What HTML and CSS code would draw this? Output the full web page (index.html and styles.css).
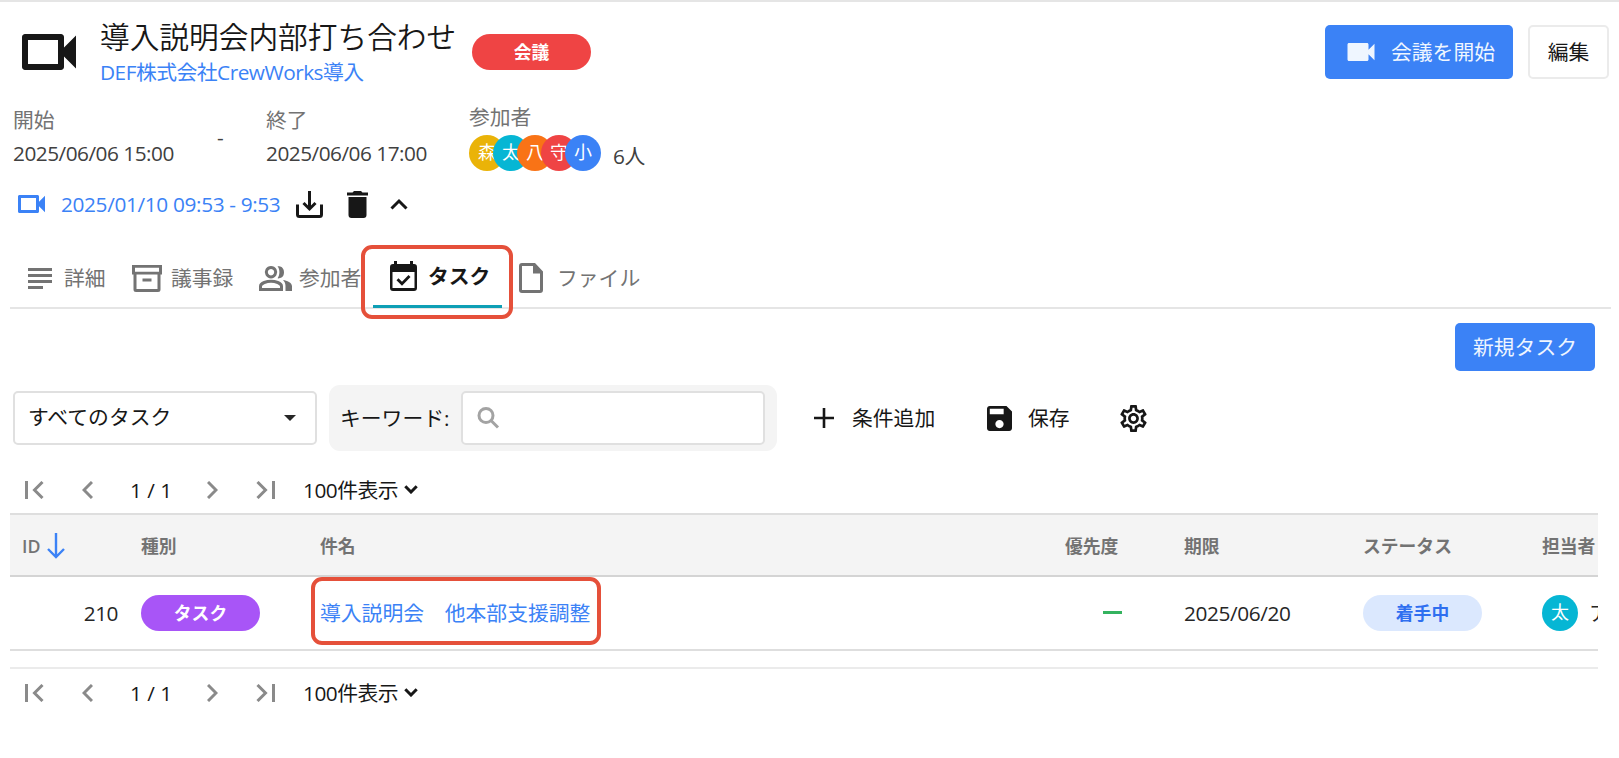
FILE: index.html
```html
<!DOCTYPE html>
<html lang="ja">
<head>
    <meta charset="UTF-8">
    <meta name="viewport" content="width=device-width, initial-scale=1.0">
    <title>導入説明会内部打ち合わせ</title>
    <link rel="stylesheet" href="styles.css">
</head>
<body>

    <header class="header">
        <svg class="header-icon" viewBox="0 0 24 24"><path d="M15 8v8H5V8h10m1-2H4c-.55 0-1 .45-1 1v10c0 .55.45 1 1 1h12c.55 0 1-.45 1-1v-3.5l4 4v-11l-4 4V7c0-.55-.45-1-1-1z"/></svg>
        <div class="header-text">
            <h1>導入説明会内部打ち合わせ</h1>
            <a class="project-link" href="#">DEF株式会社CrewWorks導入</a>
        </div>
        <span class="badge badge-meeting">会議</span>
        <div class="header-buttons">
            <button class="button button-start">
                <svg viewBox="0 0 24 24"><path d="M17 10.5V7c0-.55-.45-1-1-1H4c-.55 0-1 .45-1 1v10c0 .55.45 1 1 1h12c.55 0 1-.45 1-1v-3.5l4 4v-11l-4 4z"/></svg>
                会議を開始
            </button>
            <button class="button button-edit">編集</button>
        </div>
    </header>

    <section class="meta">
        <div class="meta-start">
            <div class="meta-label">開始</div>
            <div class="meta-date">2025/06/06 15:00</div>
        </div>
        <div class="meta-dash">-</div>
        <div class="meta-end">
            <div class="meta-label">終了</div>
            <div class="meta-date">2025/06/06 17:00</div>
        </div>
        <div class="meta-members">
            <div class="meta-label">参加者</div>
            <div class="members">
                <span class="avatar yellow">森</span>
                <span class="avatar cyan">太</span>
                <span class="avatar orange">八</span>
                <span class="avatar red">守</span>
                <span class="avatar blue">小</span>
                <span class="members-count">6人</span>
            </div>
        </div>
    </section>

    <section class="recording">
        <svg class="rec-video" viewBox="0 0 24 24"><path d="M15 8v8H5V8h10m1-2H4c-.55 0-1 .45-1 1v10c0 .55.45 1 1 1h12c.55 0 1-.45 1-1v-3.5l4 4v-11l-4 4V7c0-.55-.45-1-1-1z"/></svg>
        <a class="rec-link" href="#">2025/01/10 09:53 - 9:53</a>
        <svg class="rec-download" viewBox="0 0 27 27"><path d="M1.500 13.500v10q0 2 2 2h20q2 0 2-2v-10M13.500 0v18M7.500 12l6 6 6-6"/></svg>
        <svg class="rec-delete" viewBox="0 0 21 27"><path d="M1.500 6h18v18q0 3-3 3h-12q-3 0-3-3zM0 1.500h5.500L7 0h7l1.500 1.500H21v3H0z"/></svg>
        <svg class="rec-toggle" viewBox="0 0 18 12"><path d="M1.500 10.500L9 3l7.500 7.500"/></svg>
    </section>

    <nav class="tabs">
        <a class="tab tab-detail" href="#">
            <svg viewBox="0 0 24 21"><path d="M0 0h24v3H0zM0 6h24v3H0zM0 12h24v3H0zM0 18h15v3H0z"/></svg>
            詳細
        </a>
        <a class="tab tab-minutes" href="#">
            <svg viewBox="0 0 30 27"><path d="M0 0h30v9.500h-1.500v15q0 2.500-2.500 2.500H4q-2.500 0-2.500-2.500v-15H0zM3 2.800v4h24v-4zM4.500 9.500V24h21V9.500zM10.500 13.500h9v3h-9z" fill-rule="evenodd"/></svg>
            議事録
        </a>
        <a class="tab tab-members" href="#">
            <svg viewBox="0 0 33 25"><path d="M12 1.500a4.700 4.700 0 1 0 .01 0M1.500 23.500v-3.300C1.500 17 8 15.200 12 15.200s10.500 1.800 10.500 5v3.300z" fill="none" stroke="currentColor" stroke-width="3"/><path d="M18.500.3c1-.3 6.500-.3 6.500 6s-5.500 6.300-6.500 6c2.600-3.300 2.600-8.700 0-12zM24 14c4 .7 9 2.600 9 6.200V25h-6.500v-5c0-2.600-1-4.500-2.500-6z"/></svg>
            参加者
        </a>
        <a class="tab tab-task active" href="#">
            <svg viewBox="0 0 27 30"><path d="M4 0h3v3h13V0h3v3h1q3 0 3 3v21q0 3-3 3H3q-3 0-3-3V6q0-3 3-3h1zM2.500 11v16h22V11zM8.500 17.300l3.500 3.500 6.500-6.800 2 2L12 24.800l-5.500-5.500z" fill-rule="evenodd"/></svg>
            タスク
            <span class="marker marker-tab"></span>
        </a>
        <a class="tab tab-file" href="#">
            <svg viewBox="0 0 24 30"><path d="M3 0h13l8 8.500V27q0 3-3 3H3q-3 0-3-3V3q0-3 3-3zM3 3v24h18V10.500h-7V3z" fill-rule="evenodd"/></svg>
            ファイル
        </a>
    </nav>

    <main class="content">
        <div class="actions">
            <button class="button button-new">新規タスク</button>
        </div>

        <div class="filters">
            <div class="select">
                <span>すべてのタスク</span>
                <i class="caret"></i>
            </div>
            <div class="keyword">
                <span class="keyword-label">キーワード:</span>
                <div class="keyword-input">
                    <svg viewBox="0 0 22 22"><circle cx="8.500" cy="8.500" r="7"/><path d="M13.500 13.500l7 7"/></svg>
                </div>
            </div>
            <a class="filter-link filter-add" href="#">
                <svg viewBox="0 0 20 20"><path d="M8.700 0h2.600v8.700H20v2.600h-8.700V20H8.700v-8.700H0V8.700h8.700z"/></svg>
                条件追加
            </a>
            <a class="filter-link filter-save" href="#">
                <svg viewBox="3 3 18 18"><path d="M17 3H5c-1.110 0-2 .9-2 2v14c0 1.100.89 2 2 2h14c1.100 0 2-.9 2-2V7l-4-4zm-5 16c-1.660 0-3-1.340-3-3s1.340-3 3-3 3 1.340 3 3-1.340 3-3 3zm3-10H5V5h10v4z"/></svg>
                保存
            </a>
            <svg class="filter-gear" viewBox="2 2 20 20"><path d="M19.430 12.980c.04-.320.070-.640.070-.980s-.03-.660-.07-.980l2.110-1.650c.190-.150.240-.420.120-.640l-2-3.460c-.09-.160-.26-.250-.44-.250-.06 0-.12.010-.17.030l-2.490 1c-.52-.400-1.080-.730-1.690-.980l-.38-2.650C14.460 2.180 14.250 2 14 2h-4c-.25 0-.46.180-.49.420l-.38 2.650c-.61.250-1.170.590-1.690.980l-2.490-1c-.06-.02-.12-.03-.18-.03-.17 0-.34.090-.43.250l-2 3.460c-.13.220-.07.490.12.640l2.110 1.650c-.04.320-.07.650-.07.980s.03.660.07.980l-2.110 1.650c-.19.150-.24.420-.12.640l2 3.460c.09.160.26.250.44.250.06 0 .12-.01.17-.03l2.490-1c.52.400 1.080.730 1.690.980l.38 2.650c.03.240.24.420.49.420h4c.25 0 .46-.18.49-.42l.38-2.650c.61-.25 1.170-.59 1.690-.98l2.490 1c.06.02.12.03.18.03.17 0 .34-.09.43-.25l2-3.460c.12-.22.07-.49-.12-.64l-2.110-1.650zm-1.980-1.710c.04.310.05.520.05.730 0 .21-.02.430-.05.730l-.14 1.130.89.700 1.080.840-.7 1.210-1.270-.51-1.040-.42-.9.680c-.43.320-.84.560-1.250.730l-1.060.430-.16 1.130-.2 1.350h-1.400l-.19-1.350-.16-1.130-1.060-.43c-.43-.18-.83-.41-1.230-.71l-.91-.7-1.060.430-1.270.51-.7-1.210 1.080-.84.890-.7-.14-1.130c-.03-.31-.05-.54-.05-.74s.02-.43.050-.73l.14-1.130-.89-.7-1.080-.84.700-1.210 1.270.51 1.040.42.900-.68c.43-.32.840-.56 1.250-.73l1.060-.43.160-1.130.200-1.350h1.390l.19 1.350.16 1.130 1.060.430c.43.180.83.410 1.230.710l.91.700 1.060-.43 1.270-.51.700 1.210-1.070.850-.89.700.14 1.130zM12 8c-2.210 0-4 1.790-4 4s1.790 4 4 4 4-1.790 4-4-1.790-4-4-4zm0 6c-1.100 0-2-.9-2-2s.9-2 2-2 2 .9 2 2-.9 2-2 2z"/></svg>
        </div>

        <div class="pager">
            <svg class="page-first" viewBox="0 0 19 18"><path d="M1.500 0v18M17.500 1L9.500 9l8 8"/></svg>
            <svg class="page-prev" viewBox="0 0 11 18"><path d="M10 1L2 9l8 8"/></svg>
            <span class="page-number">1 / 1</span>
            <svg class="page-next" viewBox="0 0 11 18"><path d="M1 1l8 8-8 8"/></svg>
            <svg class="page-last" viewBox="0 0 19 18"><path d="M17.500 0v18M1.500 1l8 8-8 8"/></svg>
            <span class="page-size">100件表示</span>
            <svg class="page-arrow" viewBox="0 0 14 9"><path d="M1.300 1.300L7 7l5.700-5.700"/></svg>
        </div>

        <div class="table">
            <div class="row row-head">
                <div class="cell-id-head">ID
                    <svg viewBox="0 0 18 26"><path d="M9 0v24M1 16l8 8 8-8"/></svg>
                </div>
                <div>種別</div>
                <div>件名</div>
                <div>優先度</div>
                <div>期限</div>
                <div>ステータス</div>
                <div>担当者</div>
            </div>
            <div class="row row-task">
                <div class="cell-id">210</div>
                <div><span class="badge badge-task">タスク</span></div>
                <div class="cell-title">
                    <a href="#">導入説明会　他本部支援調整</a>
                    <span class="marker marker-title"></span>
                </div>
                <div class="cell-priority"><i class="priority"></i></div>
                <div class="cell-date">2025/06/20</div>
                <div><span class="badge badge-status">着手中</span></div>
                <div class="cell-owner"><span class="avatar cyan">太</span><span>ア</span></div>
            </div>
        </div>

        <div class="pager pager-bottom">
            <svg class="page-first" viewBox="0 0 19 18"><path d="M1.500 0v18M17.500 1L9.500 9l8 8"/></svg>
            <svg class="page-prev" viewBox="0 0 11 18"><path d="M10 1L2 9l8 8"/></svg>
            <span class="page-number">1 / 1</span>
            <svg class="page-next" viewBox="0 0 11 18"><path d="M1 1l8 8-8 8"/></svg>
            <svg class="page-last" viewBox="0 0 19 18"><path d="M17.500 0v18M1.500 1l8 8-8 8"/></svg>
            <span class="page-size">100件表示</span>
            <svg class="page-arrow" viewBox="0 0 14 9"><path d="M1.300 1.300L7 7l5.700-5.700"/></svg>
        </div>
    </main>

</body>
</html>
```

FILE: styles.css
```css
* {
    box-sizing: border-box;
}

body {
    margin: 0;
    border-top: 2px solid #e5e5e5;
    background-color: #fff;
    color: #262626;
    font-family: 'Open Sans', 'Noto Sans CJK JP', sans-serif;
    font-size: 20.8px;
    line-height: 30px;
    white-space: nowrap;
    overflow: hidden;
}

a {
    color: #3b82f6;
    text-decoration: none;
}

svg {
    display: block;
    flex: none;
    fill: currentColor;
}

/* Header */
.header {
    display: flex;
    align-items: flex-start;
    height: 100px;
    padding: 14px 10px 0 13px;
}

.header-icon {
    width: 72px;
    height: 72px;
    color: #171717;
}

.header-text {
    width: 372px;
    margin-left: 15px;
}

h1 {
    margin: 0;
    padding-top: 1px;
    font-size: 29.7px;
    font-weight: 350;
    line-height: 40px;
    color: #171717;
}

.project-link {
    display: block;
    line-height: 30px;
    letter-spacing: -0.5px;
}

.badge {
    display: block;
    width: 119px;
    height: 36px;
    border-radius: 18px;
    color: #fff;
    font-size: 17.8px;
    font-weight: 700;
    line-height: 36px;
    text-align: center;
}

.badge-meeting {
    margin-top: 18px;
    background-color: #ef4444;
}

.header-buttons {
    display: flex;
    gap: 15px;
    margin: 9px 0 0 auto;
}

.button {
    display: flex;
    align-items: center;
    justify-content: center;
    height: 54px;
    padding: 0;
    border: none;
    border-radius: 5px;
    background-color: #3b82f6;
    color: #eff6ff;
    font-family: inherit;
    font-size: 20.8px;
    line-height: 30px;
}

.button-start {
    width: 188px;
    gap: 12px;
}

.button-start svg {
    width: 36px;
    height: 36px;
}

.button-edit {
    width: 81px;
    border: 2px solid #ebebeb;
    background-color: #fff;
    color: #171717;
}

/* Start, end and members */
.meta {
    display: flex;
    height: 78px;
    padding-left: 13px;
    color: #404040;
}

.meta-label {
    padding-top: 3px;
    color: #737373;
}

.meta-date {
    padding-top: 3px;
    letter-spacing: -0.5px;
}

.meta-start {
    width: 204px;
}

.meta-dash {
    width: 49px;
    padding-top: 20px;
}

.meta-end {
    width: 203px;
}

.meta-members .meta-label {
    padding-top: 0;
}

.members {
    display: flex;
    margin-top: 3px;
}

.avatar {
    flex: none;
    width: 36px;
    height: 36px;
    border-radius: 50%;
    color: #fff;
    font-size: 18px;
    line-height: 35px;
    text-align: center;
}

.members .avatar + .avatar {
    margin-left: -12px;
}

.yellow {
    background-color: #eab308;
}

.cyan {
    background-color: #06b6d4;
}

.orange {
    background-color: #f97316;
}

.red {
    background-color: #ef4444;
}

.blue {
    background-color: #3b82f6;
}

.members-count {
    padding: 6px 0 0 12px;
    letter-spacing: -0.5px;
}

/* Recording */
.recording {
    display: flex;
    align-items: center;
    height: 48px;
    padding-left: 13px;
    color: #171717;
}

.rec-video {
    width: 37px;
    height: 36px;
    color: #3b82f6;
}

.rec-link {
    width: 234px;
    margin-left: 11px;
    padding-bottom: 1px;
    letter-spacing: -0.35px;
}

.rec-download {
    width: 27px;
    height: 27px;
    margin-left: 1px;
    fill: none;
    stroke: currentColor;
    stroke-width: 3;
}

.rec-delete {
    width: 21px;
    height: 27px;
    margin-left: 24px;
}

.rec-toggle {
    width: 18px;
    height: 12px;
    margin-left: 22px;
    fill: none;
    stroke: currentColor;
    stroke-width: 3;
}

/* Tabs */
.tabs {
    display: flex;
    height: 61px;
    margin: 20px 8px 0 10px;
    border-bottom: 2px solid #e5e5e5;
}

.tab {
    display: flex;
    align-items: center;
    height: 60px;
    color: #737373;
}

.tab-detail {
    width: 122px;
    padding-left: 18px;
    gap: 12px;
}

.tab-detail svg {
    width: 24px;
    height: 21px;
}

.tab-minutes {
    width: 115px;
    gap: 9px;
}

.tab-minutes svg {
    width: 30px;
    height: 27px;
}

.tab-members {
    width: 126px;
    padding-left: 12px;
    gap: 7px;
}

.tab-members svg {
    width: 33px;
    height: 25px;
}

.tab-task {
    position: relative;
    width: 129px;
    padding: 0 0 1px 17px;
    gap: 11px;
    border-bottom: 3px solid #0e9fb5;
    color: #171717;
    font-weight: 700;
}

.tab-task svg {
    width: 27px;
    height: 30px;
}

.tab-file {
    padding-left: 17px;
    gap: 14px;
}

.tab-file svg {
    width: 24px;
    height: 30px;
}

/* Red frames over the active tab and the task title */
.marker {
    position: absolute;
    border: 4px solid #e5503a;
    border-radius: 11px;
}

.marker-tab {
    top: -3px;
    left: -12px;
    width: 152px;
    height: 74px;
}

.marker-title {
    top: 0;
    left: -9px;
    width: 290px;
    height: 68px;
}

/* Filters */
.content {
    padding-left: 10px;
}

.actions {
    display: flex;
    justify-content: flex-end;
    padding: 14px 24px 0 0;
}

.button-new {
    width: 140px;
    height: 48px;
}

.filters {
    display: flex;
    align-items: center;
    height: 66px;
    margin-top: 14px;
    padding-left: 3px;
    color: #171717;
}

.select {
    display: flex;
    align-items: center;
    justify-content: space-between;
    width: 304px;
    height: 54px;
    padding: 0 19px 3px 13px;
    border: 2px solid #e0e0e0;
    border-radius: 5px;
}

.caret {
    border-top: 6px solid #262626;
    border-left: 6px solid transparent;
    border-right: 6px solid transparent;
    margin-top: 3px;
}

.keyword {
    display: flex;
    align-items: center;
    justify-content: space-between;
    width: 448px;
    height: 66px;
    margin-left: 12px;
    padding: 0 12px 0 11px;
    border-radius: 11px;
    background-color: #f4f4f4;
}

.keyword-input {
    display: flex;
    align-items: center;
    width: 304px;
    height: 54px;
    padding-left: 14px;
    border: 2px solid #e0e0e0;
    border-radius: 5px;
    background-color: #fff;
    color: #a3a3a3;
}

.keyword-input svg {
    width: 23px;
    height: 22px;
    fill: none;
    stroke: currentColor;
    stroke-width: 3;
}

.filter-link {
    display: flex;
    align-items: center;
    gap: 18px;
    color: #171717;
}

.filter-add {
    width: 173px;
    margin-left: 37px;
}

.filter-add svg {
    width: 20px;
    height: 20px;
}

.filter-save {
    width: 133px;
    gap: 16px;
}

.filter-save svg {
    width: 25px;
    height: 25px;
}

.filter-gear {
    width: 27px;
    height: 27px;
}

/* Pager */
.pager {
    display: flex;
    align-items: center;
    height: 49px;
    margin-top: 13px;
    padding: 2px 0 0 15px;
    color: #171717;
}

.pager-bottom {
    width: 1588px;
    margin-top: 16px;
    padding-top: 0;
    border-top: 2px solid #ebebeb;
}

.pager svg {
    fill: none;
    stroke: #8a8a8a;
    stroke-width: 3;
}

.page-first,
.page-last {
    width: 19px;
    height: 18px;
}

.page-prev {
    width: 11px;
    height: 18px;
    margin-left: 38px;
}

.page-number {
    width: 42px;
    margin-left: 37px;
}

.page-next {
    width: 11px;
    height: 18px;
    margin-left: 35px;
}

.page-last {
    margin-left: 38px;
}

.page-size {
    width: 94px;
    margin-left: 28px;
    padding-top: 1px;
    letter-spacing: -0.5px;
}

.pager .page-arrow {
    width: 14px;
    height: 9px;
    margin-left: 7px;
    stroke: #171717;
}

/* Task table */
.table {
    width: 1588px;
    overflow: hidden;
    border-top: 2px solid #dedede;
    border-bottom: 2px solid #dedede;
}

.row {
    display: grid;
    grid-template-columns: 131px 179px 745px 119px 179px 179px 56px;
    align-items: center;
}

.row-head {
    height: 62px;
    padding-top: 1px;
    border-bottom: 2px solid #d4d4d4;
    background-color: #f4f4f4;
    color: #737373;
    font-size: 17.8px;
    font-weight: 700;
}

.cell-id-head {
    display: flex;
    align-items: center;
    gap: 7px;
    padding-left: 12px;
    font-weight: 600;
}

.cell-id-head svg {
    width: 18px;
    height: 26px;
    fill: none;
    stroke: #3b82f6;
    stroke-width: 2.4;
}

.row-task {
    height: 72px;
    padding-bottom: 1px;
}

.cell-id {
    padding-right: 23px;
    text-align: right;
    letter-spacing: -0.5px;
}

.badge-task {
    background-color: #a855f7;
}

.cell-title {
    position: relative;
    display: flex;
    align-items: center;
    height: 71px;
}

.cell-priority {
    padding-left: 38px;
}

.priority {
    display: block;
    width: 19px;
    height: 3px;
    background-color: #34b35f;
}

.cell-date {
    letter-spacing: -0.4px;
}

.badge-status {
    background-color: #dbe8fe;
    color: #2f6ff0;
}

.cell-owner {
    display: flex;
    align-items: center;
    gap: 11px;
}
```
